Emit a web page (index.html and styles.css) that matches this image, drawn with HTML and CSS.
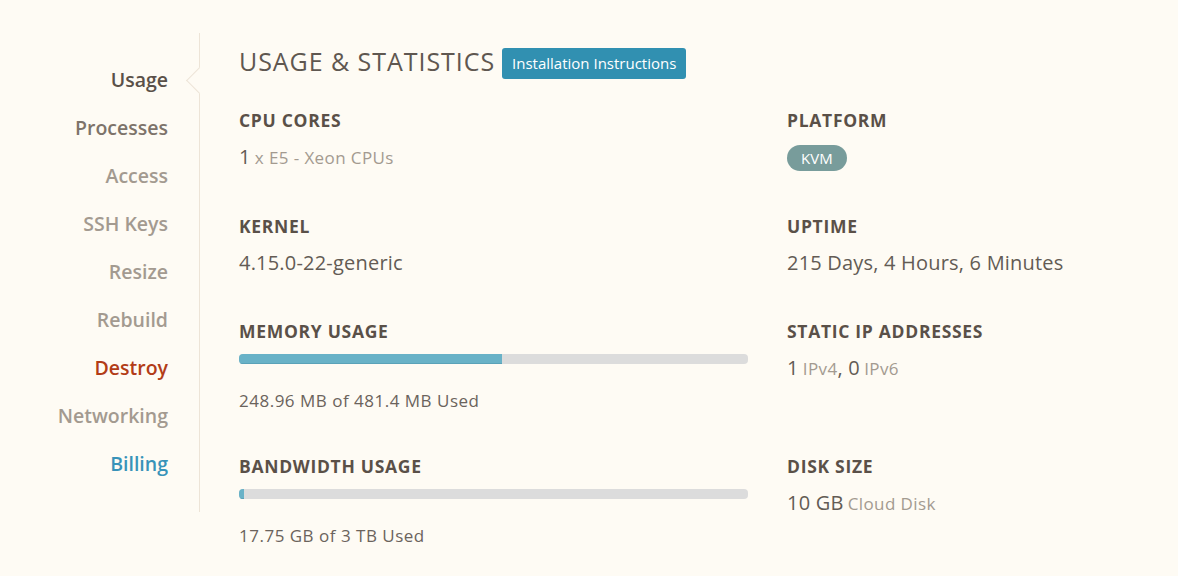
FILE: index.html
```html
<!DOCTYPE html>
<html>
<head>
<meta charset="utf-8">
<link rel="stylesheet" href="styles.css">
</head>
<body>
<div class="page">
  <nav class="sidebar">
    <a class="nav-item active">Usage</a>
    <a class="nav-item mid">Processes</a>
    <a class="nav-item">Access</a>
    <a class="nav-item">SSH Keys</a>
    <a class="nav-item">Resize</a>
    <a class="nav-item">Rebuild</a>
    <a class="nav-item danger">Destroy</a>
    <a class="nav-item">Networking</a>
    <a class="nav-item billing">Billing</a>
  </nav>
  <main class="main">
    <div class="header">
      <h1 class="title">USAGE &amp; STATISTICS</h1>
      <a class="btn">Installation Instructions</a>
    </div>
    <div class="stats">
      <div class="stat">
        <div class="label">CPU Cores</div>
        <div class="value"><span class="num">1</span> <span class="unit">x E5 - Xeon CPUs</span></div>
      </div>
      <div class="stat">
        <div class="label">Platform</div>
        <div class="value"><span class="pill">KVM</span></div>
      </div>
      <div class="stat">
        <div class="label">Kernel</div>
        <div class="value"><span class="num">4.15.0-22-generic</span></div>
      </div>
      <div class="stat">
        <div class="label">Uptime</div>
        <div class="value"><span class="num">215 Days, 4 Hours, 6 Minutes</span></div>
      </div>
      <div class="stat">
        <div class="label">Memory Usage</div>
        <div class="bar"><div class="fill" style="width:51.7%"></div></div>
        <div class="used">248.96 MB of 481.4 MB Used</div>
      </div>
      <div class="stat">
        <div class="label">Static IP Addresses</div>
        <div class="value value-low"><span class="num">1</span> <span class="unit">IPv4</span><span class="num">, 0</span> <span class="unit">IPv6</span></div>
      </div>
      <div class="stat">
        <div class="label">Bandwidth Usage</div>
        <div class="bar"><div class="fill" style="width:1%"></div></div>
        <div class="used">17.75 GB of 3 TB Used</div>
      </div>
      <div class="stat">
        <div class="label">Disk Size</div>
        <div class="value value-low"><span class="num">10 GB</span> <span class="unit">Cloud Disk</span></div>
      </div>
    </div>
  </main>
</div>
</body>
</html>
```

FILE: styles.css
```css
html, body {
  margin: 0;
  padding: 0;
  background: #fefbf4;
}
body {
  font-family: "Open Sans", Lato, sans-serif;
  color: #5f5750;
}
.page {
  display: flex;
  padding-top: 33px;
}
.sidebar {
  width: 200px;
  height: 479px;
  box-sizing: border-box;
  border-right: 1px solid #ede4d7;
  padding-top: 23px;
  padding-right: 31px;
  display: flex;
  flex-direction: column;
  align-items: flex-end;
}
.nav-item {
  position: relative;
  display: block;
  height: 48px;
  line-height: 48px;
  font-size: 19.5px;
  font-weight: 600;
  color: #a39a90;
  text-align: right;
  width: 100%;
}
.nav-item.active {
  color: #5a5048;
}
.nav-item.active::after {
  content: "";
  position: absolute;
  right: -41px;
  top: 15px;
  width: 18px;
  height: 18px;
  background: #fefbf4;
  border-left: 1px solid #ede4d7;
  border-bottom: 1px solid #ede4d7;
  transform: rotate(45deg);
}
.nav-item.mid { color: #7d736a; }
.nav-item.danger { color: #b23c17; }
.nav-item.billing { color: #3893b9; }

.main {
  margin-left: 39px;
  width: 900px;
}
.header {
  display: flex;
  align-items: center;
  margin-top: 15px;
  height: 31px;
}
.title {
  margin: 0;
  font-size: 25px;
  font-weight: 400;
  color: #5f5750;
  letter-spacing: 0.95px;
  line-height: 31px;
  position: relative;
  top: -2px;
}
.btn {
  margin-left: 7px;
  display: inline-block;
  height: 31px;
  line-height: 31px;
  padding: 0 10px;
  background: #3190b1;
  color: #ffffff;
  font-size: 15px;
  border-radius: 3px;
}
.stats {
  display: grid;
  grid-template-columns: 509px 1fr;
  column-gap: 39px;
  row-gap: 45px;
  margin-top: 31px;
}
.label {
  font-size: 17.5px;
  line-height: 20px;
  font-weight: 700;
  letter-spacing: 0.7px;
  text-transform: uppercase;
  color: #5a5048;
}
.value {
  margin-top: 15px;
  line-height: 24px;
}
.value-low {
  margin-top: 15px;
}
.num {
  font-size: 20px;
  letter-spacing: 0.2px;
  color: #635b54;
}
.unit {
  font-size: 17px;
  letter-spacing: 0.4px;
  color: #a39a90;
}
.pill {
  display: inline-block;
  height: 26px;
  line-height: 26px;
  padding: 0 14px;
  border-radius: 13px;
  background: #789c9b;
  color: #ffffff;
  font-size: 15px;
  vertical-align: top;
}
.bar {
  margin-top: 13px;
  height: 10px;
  border-radius: 4px;
  background: #dcdcdc;
  overflow: hidden;
}
.fill {
  height: 100%;
  background: #69b2c7;
  box-shadow: inset 0 -1px 0 #5aa2b8;
}
.used {
  margin-top: 26px;
  font-size: 17px;
  letter-spacing: 0.5px;
  line-height: 21px;
  color: #6b635c;
}
```
